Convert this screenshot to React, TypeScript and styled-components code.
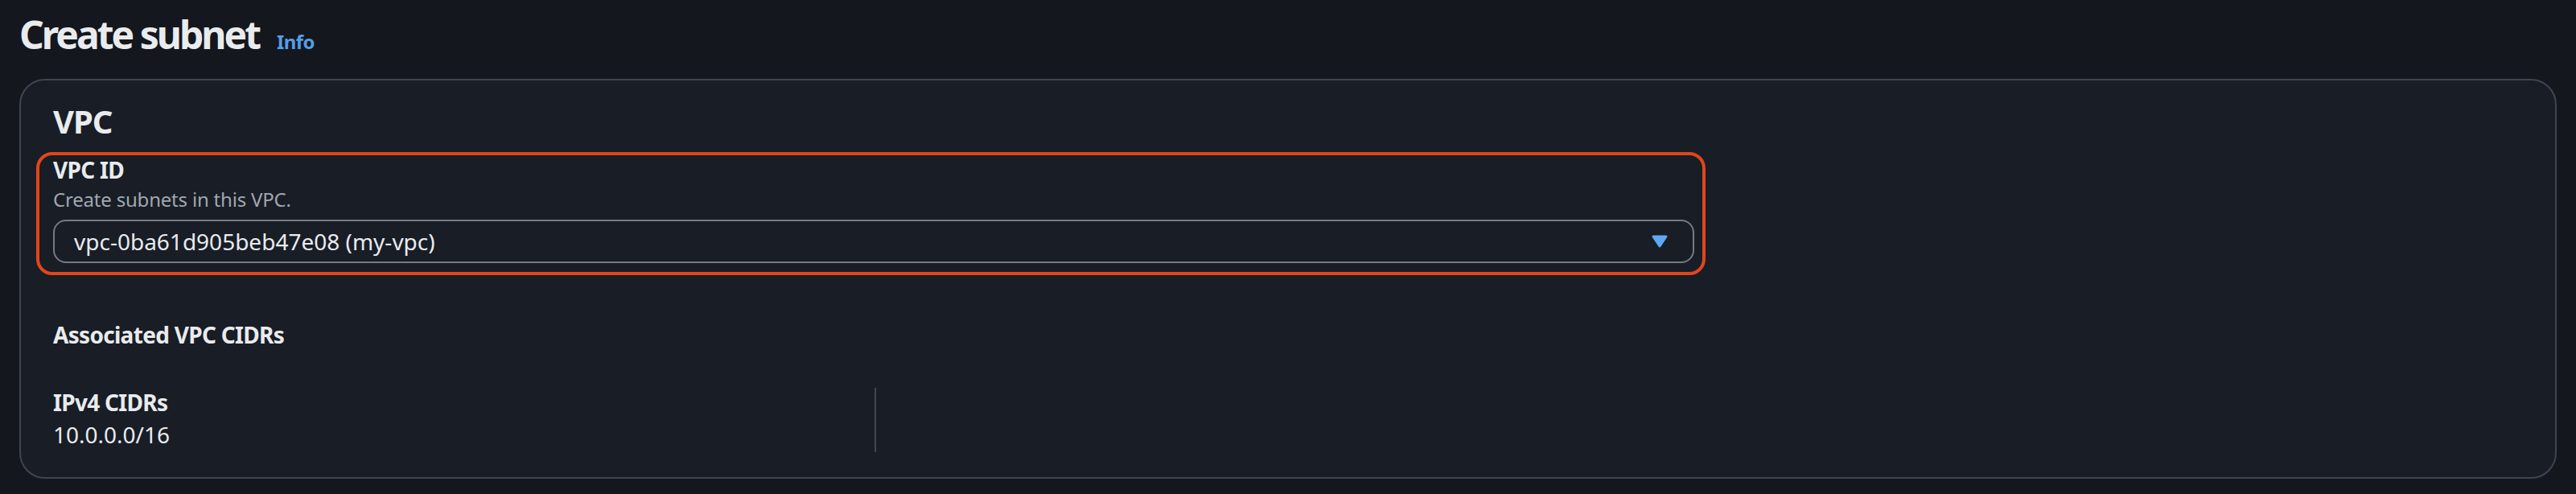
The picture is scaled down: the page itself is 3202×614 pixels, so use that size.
import React from 'react';
import styled, { createGlobalStyle } from 'styled-components';

const GlobalStyle = createGlobalStyle`
  html, body {
    margin: 0;
    padding: 0;
    background: #14171d;
    font-family: "Noto Sans", "Open Sans", sans-serif;
    color: #e9ebed;
  }
`;

const Page = styled.div`
  padding: 15px 24px 0;
`;

const Header = styled.div`
  display: flex;
  align-items: baseline;
  gap: 22px;
  margin-bottom: 27px;
`;

const Title = styled.h1`
  margin: 0;
  font-size: 48px;
  line-height: 56px;
  font-weight: 700;
  letter-spacing: -3px;
  color: #e9ebed;
`;

const InfoLink = styled.a`
  font-size: 24px;
  line-height: 32px;
  font-weight: 700;
  letter-spacing: -0.6px;
  color: #539fe5;
  text-decoration: none;
`;

const Card = styled.section`
  background: #181d26;
  border: 2px solid #3f4550;
  border-radius: 32px;
  padding: 27px 40px 31px;
`;

const SectionTitle = styled.h2`
  margin: 0 0 14px;
  font-size: 40px;
  line-height: 48px;
  font-weight: 700;
  letter-spacing: -1px;
`;

const Highlight = styled.div`
  width: 2075px;
  box-sizing: border-box;
  margin-left: -21px;
  padding: 0 10px 11px 17px;
  border: 4px solid #e0461b;
  border-radius: 20px;
`;

const Label = styled.div`
  font-size: 28px;
  line-height: 36px;
  font-weight: 700;
  letter-spacing: -0.7px;
  color: #e9ebed;
`;

const Description = styled.div`
  margin-top: 3px;
  font-size: 24px;
  line-height: 32px;
  letter-spacing: -0.2px;
  color: #a1a7b0;
`;

const SelectBox = styled.div`
  margin-top: 9px;
  height: 54px;
  box-sizing: border-box;
  display: flex;
  align-items: center;
  justify-content: space-between;
  padding: 0 30px 0 24px;
  border: 2px solid #757b85;
  border-radius: 16px;
  font-size: 28px;
  line-height: 36px;
  color: #e9ebed;
`;

const SubHeading = styled.h3`
  margin: 56px 0 48px;
  font-size: 28px;
  line-height: 36px;
  font-weight: 700;
  letter-spacing: -0.7px;
`;

const Columns = styled.div`
  display: grid;
  grid-template-columns: repeat(3, 1fr);
`;

const Column = styled.div<{ $divider?: boolean }>`
  display: flex;
  flex-direction: column;
  gap: 4px;
  padding-bottom: 4px;
  border-right: ${(p) => (p.$divider ? '2px solid #414750' : 'none')};
`;

const Value = styled.div`
  font-size: 28px;
  line-height: 36px;
  color: #e9ebed;
`;

function Caret() {
  return (
    <svg width="22" height="18" viewBox="0 0 22 18">
      <path
        d="M3 3 L19 3 L11 15 Z"
        fill="#5ea9f1"
        stroke="#5ea9f1"
        strokeWidth="3"
        strokeLinejoin="round"
      />
    </svg>
  );
}

export default function App() {
  return (
    <>
      <GlobalStyle />
      <Page>
        <Header>
          <Title>Create subnet</Title>
          <InfoLink href="#">Info</InfoLink>
        </Header>
        <Card>
          <SectionTitle>VPC</SectionTitle>
          <Highlight>
            <Label>VPC ID</Label>
            <Description>Create subnets in this VPC.</Description>
            <SelectBox>
              <span>vpc-0ba61d905beb47e08 (my-vpc)</span>
              <Caret />
            </SelectBox>
          </Highlight>
          <SubHeading>Associated VPC CIDRs</SubHeading>
          <Columns>
            <Column $divider>
              <Label>IPv4 CIDRs</Label>
              <Value>10.0.0.0/16</Value>
            </Column>
            <Column />
            <Column />
          </Columns>
        </Card>
      </Page>
    </>
  );
}
